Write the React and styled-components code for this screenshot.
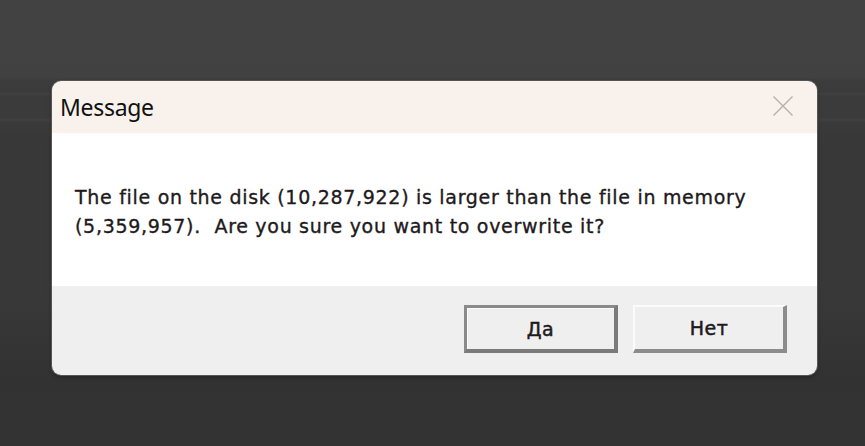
import React from "react";
import styled, { createGlobalStyle } from "styled-components";

const Global = createGlobalStyle`
  html, body { margin: 0; padding: 0; }
  body {
    width: 865px;
    height: 446px;
    overflow: hidden;
    background:
      linear-gradient(180deg,
        #424242 0px, #414141 78px,
        #3c3c3c 80px, #3b3b3b 92px, #414141 94px, #3b3b3b 96px,
        #3b3b3b 118px, #414141 120px, #3a3a3a 122px, #383838 140px,
        #383838 300px, #323232 380px, #333333 446px);
  }
`;

const Stage = styled.div`
  box-sizing: border-box;
  width: 865px;
  height: 446px;
  padding: 81px 0 0 52px;
`;

const Dialog = styled.div`
  width: 765px;
  height: 294px;
  border-radius: 9px;
  overflow: hidden;
  display: flex;
  flex-direction: column;
  box-shadow: 0 0 0 1px #555555, 0 2px 4px rgba(0,0,0,0.35);
`;

const TitleBar = styled.div`
  height: 52px;
  flex: none;
  background: #f9f1eb;
  display: flex;
  align-items: center;
  justify-content: space-between;
  padding: 0 23px 0 8px;
`;

const Title = styled.div`
  font-family: "Noto Sans", "Open Sans", sans-serif;
  font-size: 23px;
  color: #111;
  letter-spacing: -0.3px;
  margin-top: -1px;
`;

const Close = styled.svg`
  width: 22px;
  height: 22px;
  margin-top: -2px;
`;

const Body = styled.div`
  height: 153px;
  flex: none;
  background: #ffffff;
  box-sizing: border-box;
  padding: 50px 0 0 23px;
`;

const MessageText = styled.p`
  margin: 0;
  font-family: "DejaVu Sans", sans-serif;
  font-size: 19px;
  line-height: 29px;
  color: #1e1a1c;
  white-space: pre;
  letter-spacing: 0.7px;
  -webkit-text-stroke: 0.35px #1e1a1c;
`;

const Footer = styled.div`
  flex: 1;
  background: #efefef;
  display: flex;
  justify-content: flex-end;
  align-items: flex-start;
  gap: 15px;
  padding: 19px 30px 0 0;
`;

const Button = styled.button`
  width: 154px;
  height: 48px;
  box-sizing: border-box;
  background: #efefef;
  font-family: "DejaVu Sans", sans-serif;
  font-size: 19px;
  letter-spacing: 0.5px;
  color: #1e1a1c;
  -webkit-text-stroke: 0.5px #1e1a1c;
  padding: 0;
  border-style: solid;
  border-width: ${p => (p.$default ? "3px 4px 4px 3px" : "2px 4px 4px 2px")};
  border-color: ${p =>
    p.$default
      ? "#8a8a8a #7a7a7a #7a7a7a #8a8a8a"
      : "#fbfbfb #8c8c8c #8c8c8c #fbfbfb"};
  box-shadow: ${p => (p.$default ? "inset 1px 1px 0 #fbfbfb" : "none")};
`;

export default function App() {
  return (
    <>
      <Global />
      <Stage>
        <Dialog>
          <TitleBar>
            <Title>Message</Title>
            <Close viewBox="0 0 22 22">
              <path d="M1.5 1.5 L20.5 20.5 M20.5 1.5 L1.5 20.5" stroke="#b5b0ad" strokeWidth="1.4" fill="none" />
            </Close>
          </TitleBar>
          <Body>
            <MessageText>
              {"The file on the disk (10,287,922) is larger than the file in memory\n(5,359,957).  Are you sure you want to overwrite it?"}
            </MessageText>
          </Body>
          <Footer>
            <Button $default>Да</Button>
            <Button>Нет</Button>
          </Footer>
        </Dialog>
      </Stage>
    </>
  );
}
